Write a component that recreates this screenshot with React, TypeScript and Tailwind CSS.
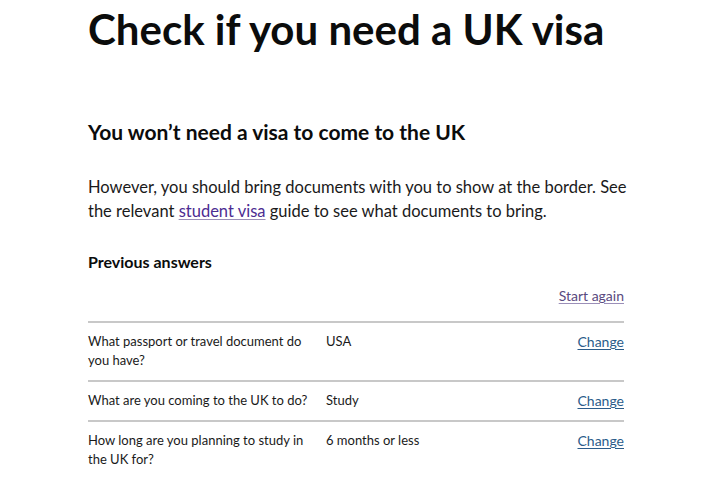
export default function App() {
  const rows = [
    { q: "What passport or travel document do you have?", a: "USA" },
    { q: "What are you coming to the UK to do?", a: "Study" },
    { q: "How long are you planning to study in the UK for?", a: "6 months or less" },
  ];

  return (
    <div className="min-h-[480px] w-[720px] bg-white text-[#0b0c0c]" style={{ fontFamily: 'Lato, "Liberation Sans", Arial, sans-serif' }}>
      <div className="ml-[88px] w-[540px] pt-[3px]">
        <h1 className="text-[42px] font-bold leading-[52px] whitespace-nowrap">Check if you need a UK visa</h1>

        <h2 className="mt-[64px] text-[21px] font-bold leading-[26px]">You won’t need a visa to come to the UK</h2>

        <p className="mt-[30px] text-[16.5px] leading-[24px] text-[#1a1a1a]">
          However, you should bring documents with you to show at the border. See the relevant{" "}
          <a href="#" className="text-[#4c2c92] underline decoration-[#9b8fb8] underline-offset-2">student visa</a>{" "}
          guide to see what documents to bring.
        </p>

        <div className="w-[536px]">
          <h3 className="mt-[27px] text-[16px] font-bold leading-[24px]">Previous answers</h3>

          <div className="mt-[12px] flex justify-end pb-[15px]">
            <a href="#" className="text-[14px] leading-[20px] text-[#5a4a80] underline decoration-[#9b8fb8] underline-offset-2">Start again</a>
          </div>

          {rows.map((r) => (
            <div key={r.q} className="flex border-t-2 border-[#c8c8c8] pt-[9px] pb-[10px] text-[13px] leading-[19px] text-[#1a1a1a]">
              <div className="w-[238px] pr-[6px]">{r.q}</div>
              <div className="flex-1">{r.a}</div>
              <a href="#" className="text-[14px] text-[#2b5c8a] underline decoration-[#2b5c8a] underline-offset-2">Change</a>
            </div>
          ))}
        </div>
      </div>
    </div>
  );
}
